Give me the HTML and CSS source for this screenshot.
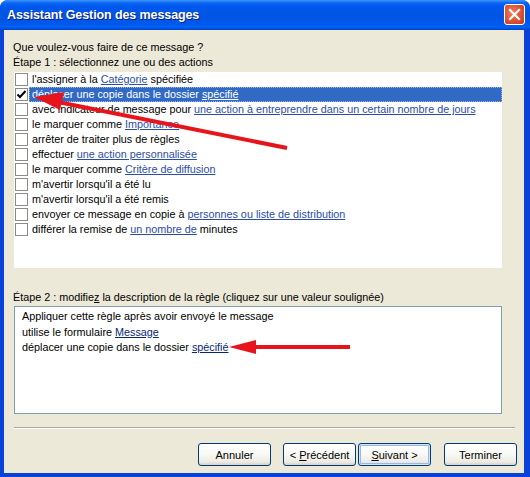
FILE: index.html
```html
<!DOCTYPE html>
<html lang="fr">
<head>
<meta charset="utf-8">
<title>Assistant Gestion des messages</title>
<link rel="stylesheet" href="styles.css">
</head>
<body>
<div class="window">
  <div class="titlebar">
    <span class="title">Assistant Gestion des messages</span>
    <span class="close"><svg width="13" height="13" viewBox="0 0 13 13"><path d="M2 2 L11 11 M11 2 L2 11" stroke="#fff" stroke-width="2.2" stroke-linecap="square"/></svg></span>
  </div>
  <div class="client">
    <div class="text-line">Que voulez-vous faire de ce message ?</div>
    <div class="text-line">Étape 1 : sélectionnez une ou des actions</div>
    <div class="listbox">
      <div class="row"><span class="cb"></span><span class="label">l'assigner à la <a>Catégorie</a> spécifiée</span></div>
      <div class="row"><span class="cb checked"><svg width="11" height="11" viewBox="0 0 11 11"><path d="M1.5 5.5 L4 8 L9.5 2" stroke="#000" stroke-width="2" fill="none"/></svg></span><span class="label selected">déplacer une copie dans le dossier <a>spécifié</a></span></div>
      <div class="row"><span class="cb"></span><span class="label">avec indicateur de message pour <a>une action à entreprendre dans un certain nombre de jours</a></span></div>
      <div class="row"><span class="cb"></span><span class="label">le marquer comme <a>Importance</a></span></div>
      <div class="row"><span class="cb"></span><span class="label">arrêter de traiter plus de règles</span></div>
      <div class="row"><span class="cb"></span><span class="label">effectuer <a>une action personnalisée</a></span></div>
      <div class="row"><span class="cb"></span><span class="label">le marquer comme <a>Critère de diffusion</a></span></div>
      <div class="row"><span class="cb"></span><span class="label">m'avertir lorsqu'il a été lu</span></div>
      <div class="row"><span class="cb"></span><span class="label">m'avertir lorsqu'il a été remis</span></div>
      <div class="row"><span class="cb"></span><span class="label">envoyer ce message en copie à <a>personnes ou liste de distribution</a></span></div>
      <div class="row"><span class="cb"></span><span class="label">différer la remise de <a>un nombre de</a> minutes</span></div>
    </div>
    <div class="text-line step2">Étape 2 : modifie<u>z</u> la description de la règle (cliquez sur une valeur soulignée)</div>
    <div class="descbox">
      <div>Appliquer cette règle après avoir envoyé le message</div>
      <div>utilise le formulaire <a>Message</a></div>
      <div>déplacer une copie dans le dossier <a>spécifié</a></div>
    </div>
    <div class="separator"></div>
    <div class="buttons">
      <button class="btn">Annuler</button>
      <button class="btn gap-l">&lt; <u>P</u>récédent</button>
      <button class="btn default"><u>S</u>uivant &gt;</button>
      <button class="btn gap-l2">Terminer</button>
    </div>
  </div>
  <svg class="arrows" width="530" height="477" viewBox="0 0 530 477">
    <line x1="287" y1="148" x2="58" y2="102" stroke="#E8141C" stroke-width="4"/>
    <polygon points="34,97 64,92 60,110" fill="#E8141C"/>
    <line x1="350" y1="347" x2="252" y2="347" stroke="#E8141C" stroke-width="4"/>
    <polygon points="229,347 256,340 256,354" fill="#E8141C"/>
  </svg>
</div>
</body>
</html>
```
FILE: styles.css
```css
html, body {
  margin: 0;
  padding: 0;
  background: #ffffff;
}
.window {
  position: relative;
  width: 530px;
  height: 477px;
  display: flex;
  flex-direction: column;
  background: #0842D8;
  border-radius: 8px 8px 0 0;
  overflow: hidden;
  font-family: "Liberation Sans", Arial, sans-serif;
  font-size: 10.8px;
  color: #000;
}
.titlebar {
  height: 30px;
  flex: none;
  display: flex;
  align-items: center;
  justify-content: space-between;
  padding: 0 5px 0 7px;
  background: linear-gradient(to bottom, #3D95FF 0, #0A66F2 3px, #0058EE 6px, #0054E3 16px, #0058EC 24px, #0062F6 27px, #004ED8 29px, #003FC4 30px);
}
.title {
  color: #fff;
  font-family: "Liberation Sans", Arial, sans-serif;
  font-weight: bold;
  font-size: 12.5px;
  text-shadow: 1px 1px 0 #0A1E7F;
  letter-spacing: -0.1px;
}
.close {
  width: 21px;
  height: 21px;
  box-sizing: border-box;
  border: 1px solid #fff;
  border-radius: 3px;
  background: radial-gradient(circle at 40% 40%, #EE8060 0, #DC5130 55%, #C23A1A 100%);
  display: flex;
  align-items: center;
  justify-content: center;
  margin-top: -2px;
}
.client {
  flex: 1;
  margin: 0 6px 4px 4px;
  background: #ECE9D8;
  display: flex;
  flex-direction: column;
  padding: 10px 7px 0 9px;
}
.text-line {
  height: 15px;
  line-height: 15px;
  white-space: nowrap;
}
.listbox {
  margin-top: 2px;
  margin-left: 1px;
  width: 488px;
  height: 196px;
  background: #fff;
  box-sizing: border-box;
}
.row {
  height: 15px;
  display: flex;
  align-items: center;
}
.cb {
  width: 13px;
  height: 13px;
  box-sizing: border-box;
  border: 1px solid #8C8C86;
  background: #fff;
  margin-left: 1px;
  flex: none;
  display: flex;
  align-items: center;
  justify-content: center;
}
.label {
  flex: 1;
  height: 15px;
  line-height: 15px;
  padding-left: 3px;
  margin-left: 1px;
  white-space: nowrap;
}
.label a {
  color: #2B4DA6;
  text-decoration: underline;
}
.label.selected {
  background: #316AC5;
  color: #fff;
  outline: 1px dotted #9FB5DF;
  outline-offset: -1px;
}
.label.selected a {
  color: #fff;
}
.step2 {
  margin-top: 22px;
  margin-left: 0;
}
.descbox {
  margin-top: 1px;
  margin-left: 1px;
  width: 488px;
  height: 108px;
  box-sizing: border-box;
  border: 1px solid #7F9DB9;
  background: #fff;
  padding: 2px 7px;
  line-height: 15.5px;
}
.descbox a {
  color: #0A2675;
  text-decoration: underline;
}
.separator {
  margin-top: 13px;
  margin-left: 1px;
  width: 501px;
  height: 0;
  border-top: 1px solid #ACA899;
  border-bottom: 1px solid #fff;
}
.buttons {
  display: flex;
  justify-content: flex-end;
  margin-top: 14px;
}
.btn {
  width: 73px;
  height: 23px;
  box-sizing: border-box;
  border: 1px solid #003C74;
  border-radius: 3px;
  background: linear-gradient(to bottom, #FFFFFF 0, #F8F8F4 50%, #ECEBE4 85%, #D6D0C5 100%);
  font-family: "Liberation Sans", Arial, sans-serif;
  font-size: 11px;
  color: #000;
  padding: 0;
  margin: 0;
}
.btn.gap-l {
  margin-left: 12px;
}
.btn.default {
  margin-left: 2px;
  box-shadow: inset 0 0 0 1px #CEE7FF, inset 0 0 0 2px #98B8EA;
}
.btn.gap-l2 {
  margin-left: 13px;
}
.arrows {
  position: absolute;
  left: 0;
  top: 0;
  pointer-events: none;
}
```
